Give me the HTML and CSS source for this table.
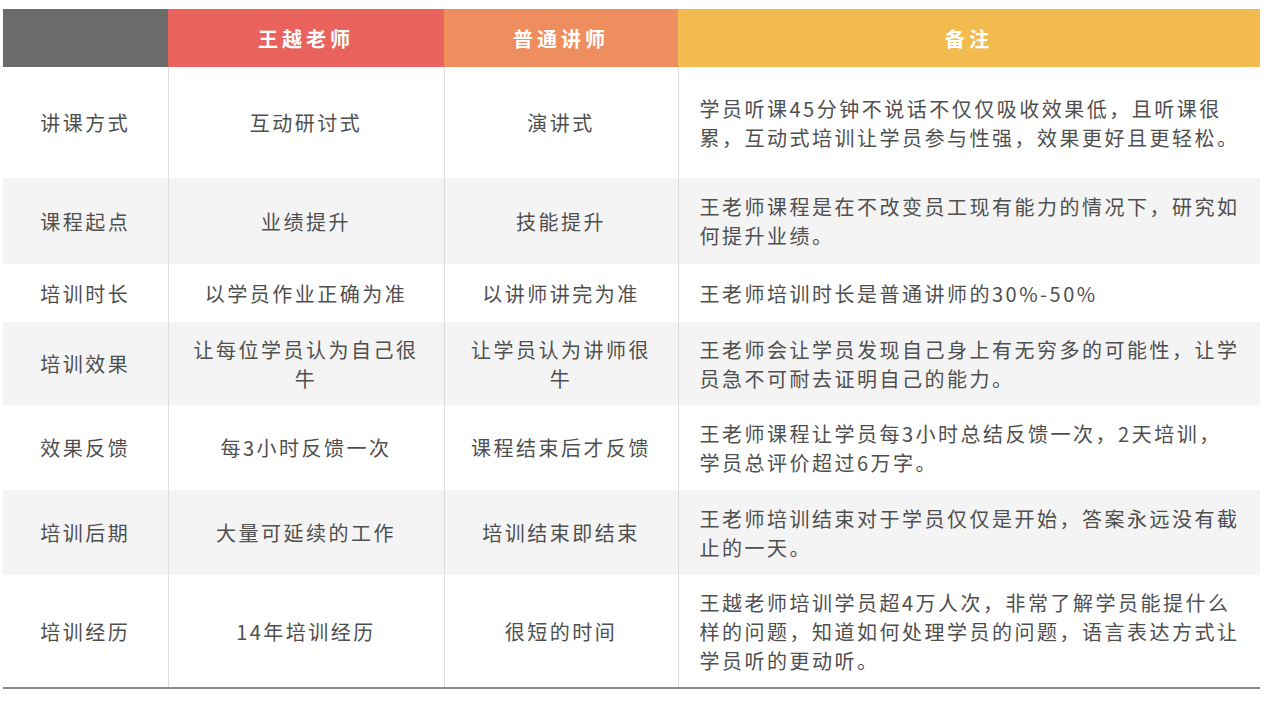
FILE: index.html
```html
<!DOCTYPE html>
<html lang="zh-CN">
<head>
<meta charset="utf-8">
<title>对比</title>
<link rel="stylesheet" href="styles.css">
</head>
<body>
<div class="wrap">
<table class="cmp">
  <colgroup>
    <col class="c-label">
    <col class="c-wang">
    <col class="c-normal">
    <col class="c-note">
  </colgroup>
  <thead>
    <tr>
      <th class="h-label"></th>
      <th class="h-wang">王越老师</th>
      <th class="h-normal">普通讲师</th>
      <th class="h-note">备注</th>
    </tr>
  </thead>
  <tbody>
    <tr class="r1">
      <td>讲课方式</td>
      <td>互动研讨式</td>
      <td>演讲式</td>
      <td class="note">学员听课45分钟不说话不仅仅吸收效果低，且听课很<br>累，互动式培训让学员参与性强，效果更好且更轻松。</td>
    </tr>
    <tr class="r2 alt">
      <td>课程起点</td>
      <td>业绩提升</td>
      <td>技能提升</td>
      <td class="note">王老师课程是在不改变员工现有能力的情况下，研究如<br>何提升业绩。</td>
    </tr>
    <tr class="r3">
      <td>培训时长</td>
      <td>以学员作业正确为准</td>
      <td>以讲师讲完为准</td>
      <td class="note">王老师培训时长是普通讲师的30%-50%</td>
    </tr>
    <tr class="r4 alt">
      <td>培训效果</td>
      <td>让每位学员认为自己很<br>牛</td>
      <td>让学员认为讲师很<br>牛</td>
      <td class="note">王老师会让学员发现自己身上有无穷多的可能性，让学<br>员急不可耐去证明自己的能力。</td>
    </tr>
    <tr class="r5">
      <td>效果反馈</td>
      <td>每3小时反馈一次</td>
      <td>课程结束后才反馈</td>
      <td class="note">王老师课程让学员每3小时总结反馈一次，2天培训，<br>学员总评价超过6万字。</td>
    </tr>
    <tr class="r6 alt">
      <td>培训后期</td>
      <td>大量可延续的工作</td>
      <td>培训结束即结束</td>
      <td class="note">王老师培训结束对于学员仅仅是开始，答案永远没有截<br>止的一天。</td>
    </tr>
    <tr class="r7 last">
      <td>培训经历</td>
      <td>14年培训经历</td>
      <td>很短的时间</td>
      <td class="note">王越老师培训学员超4万人次，非常了解学员能提什么<br>样的问题，知道如何处理学员的问题，语言表达方式让<br>学员听的更动听。</td>
    </tr>
  </tbody>
</table>
</div>
</body>
</html>
```

FILE: styles.css
```css
html, body {
  margin: 0;
  padding: 0;
  background: #ffffff;
}

.wrap {
  padding: 9px 9px 0 3px;
}

.cmp {
  width: 1257px;
  border-collapse: collapse;
  table-layout: fixed;
  font-family: "Noto Sans CJK SC", "Noto Sans", sans-serif;
  color: #4f4f4f;
}

.c-label { width: 165px; }
.c-wang { width: 276px; }
.c-normal { width: 234px; }
.c-note { width: 582px; }

.cmp th {
  height: 58px;
  padding: 0;
  color: #ffffff;
  font-size: 20px;
  font-weight: 700;
  letter-spacing: 4px;
  text-align: center;
  vertical-align: middle;
}

.h-label { background: #6b6b6b; }
.h-wang { background: #e9625c; }
.h-normal { background: #ee8d5e; }
.h-note { background: #f1bb4f; }

.cmp td {
  padding: 0;
  font-size: 20px;
  line-height: 29px;
  letter-spacing: 2.5px;
  text-align: center;
  vertical-align: middle;
}

.cmp td + td {
  border-left: 1px solid #dddddd;
}

.cmp td.note {
  text-align: left;
  padding-left: 21px;
}

.alt td {
  background: #f4f4f4;
}

.r1 { height: 111px; }
.r2 { height: 86px; }
.r3 { height: 58px; }
.r4 { height: 83px; }
.r5 { height: 85px; }
.r6 { height: 85px; }
.r7 { height: 113px; }

.last td {
  border-bottom: 2px solid #8a8a8a;
}
```
